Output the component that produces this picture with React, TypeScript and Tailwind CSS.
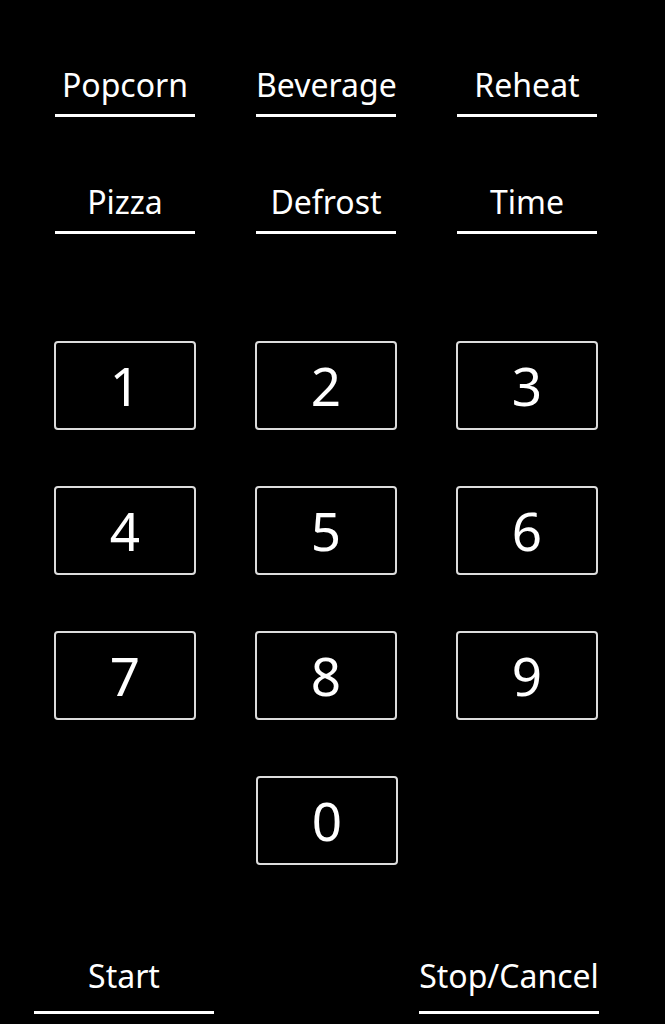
const presets = [
  ['Popcorn', 'Beverage', 'Reheat'],
  ['Pizza', 'Defrost', 'Time'],
];

const digits = [
  ['1', '2', '3'],
  ['4', '5', '6'],
  ['7', '8', '9'],
];

function Preset({ label }: { label: string }) {
  return (
    <button className="w-[140px] border-b-[3px] border-white pb-[9px] text-[32px] leading-[41px] text-white">
      {label}
    </button>
  );
}

function Key({ label }: { label: string }) {
  return (
    <button className="flex h-[89px] w-[142px] items-center justify-center rounded-[4px] border-2 border-[#dcdcdc] text-[53px] leading-none text-white">
      {label}
    </button>
  );
}

export default function App() {
  return (
    <div
      className="h-[1024px] w-[665px] overflow-hidden bg-black text-white"
      style={{ fontFamily: '"Noto Sans", "Open Sans", sans-serif' }}
    >
      <div className="flex flex-col gap-[64px] pl-[55px] pt-[64px]">
        {presets.map((row, i) => (
          <div key={i} className="flex gap-[61px]">
            {row.map((p) => (
              <Preset key={p} label={p} />
            ))}
          </div>
        ))}
      </div>

      <div className="mt-[107px] flex flex-col gap-[56px] pl-[54px]">
        {digits.map((row, i) => (
          <div key={i} className="flex gap-[59px]">
            {row.map((d) => (
              <Key key={d} label={d} />
            ))}
          </div>
        ))}
        <div className="flex pl-[202px]">
          <Key label="0" />
        </div>
      </div>

      <div className="mt-[90px] flex justify-between pl-[34px] pr-[66px]">
        <button className="w-[180px] border-b-[3px] border-white pb-[15px] text-[32px] leading-[41px] text-white">
          Start
        </button>
        <button className="w-[180px] border-b-[3px] border-white pb-[15px] text-[32px] leading-[41px] text-white">
          Stop/Cancel
        </button>
      </div>
    </div>
  );
}
